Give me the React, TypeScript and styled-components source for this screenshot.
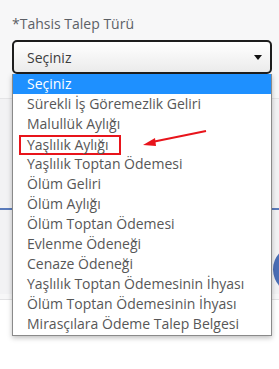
import React from "react";
import styled, { createGlobalStyle } from "styled-components";

const GlobalStyle = createGlobalStyle`
  html, body {
    margin: 0;
    padding: 0;
    background: #ffffff;
    font-family: "Open Sans", "Liberation Sans", sans-serif;
  }
`;

const Page = styled.div`
  width: 279px;
  height: 369px;
  overflow: hidden;
  background: #ffffff;
  position: relative;
`;

const Screen = styled.div`
  height: 300px;
  background: #f7f7f8;
  border-bottom: 1px solid #e2e2e4;
  padding-top: 15px;
  box-sizing: border-box;
`;

const Field = styled.div`
  margin-left: 12px;
  width: 260px;
  position: relative;
  z-index: 2;
`;

const Label = styled.label`
  display: block;
  font-size: 14px;
  line-height: 18px;
  color: #5c6066;
  margin-bottom: 7px;
`;

const SelectBox = styled.div`
  height: 34px;
  box-sizing: border-box;
  border: 2px solid #1e1e1e;
  border-radius: 5px;
  background: linear-gradient(#ffffff, #ebebeb);
  display: flex;
  align-items: center;
  justify-content: space-between;
  padding: 0 8px 0 13px;
  font-size: 14px;
  color: #3d3d3d;
`;

const Caret = styled.span`
  width: 0;
  height: 0;
  border-left: 4.5px solid transparent;
  border-right: 4.5px solid transparent;
  border-top: 5px solid #111;
`;

const Dropdown = styled.ul`
  position: absolute;
  left: 0;
  top: 100%;
  width: 260px;
  box-sizing: border-box;
  margin: 0;
  padding: 0 0 1px;
  list-style: none;
  background: #ffffff;
  border: 1px solid #8a8a8a;
  border-top: none;
  box-shadow: 0 2px 5px rgba(0, 0, 0, 0.25);
`;

const Option = styled.li<{ $active?: boolean }>`
  height: 20px;
  line-height: 20px;
  padding-left: 14px;
  font-size: 14px;
  white-space: nowrap;
  color: ${(p) => (p.$active ? "#ffffff" : "#575757")};
  background: ${(p) => (p.$active ? "#1e90ff" : "transparent")};
`;

const Marked = styled.span`
  display: inline-block;
  margin-left: -8px;
  padding: 0 11px 0 6px;
  height: 16px;
  line-height: 15px;
  border: 2px solid #e8141b;
  vertical-align: top;
  margin-top: 1px;
`;

const Card = styled.div`
  margin-top: 24px;
  height: 195px;
  background: #f2f2f4;
  border-top: 1px solid #e4e4e6;
  display: flex;
  flex-direction: column;
`;

const StepLine = styled.div`
  margin-top: 109px;
  height: 2px;
  background: #5a7bbb;
`;

const Fab = styled.div`
  align-self: flex-end;
  margin-top: 35px;
  margin-right: -44px;
  width: 50px;
  height: 50px;
  border-radius: 50%;
  background: #4a6db5;
`;

const Pointer = styled.svg`
  position: absolute;
  left: 140px;
  top: 127px;
  z-index: 3;
`;

const options = [
  "Seçiniz",
  "Sürekli İş Göremezlik Geliri",
  "Malullük Aylığı",
  "Yaşlılık Aylığı",
  "Yaşlılık Toptan Ödemesi",
  "Ölüm Geliri",
  "Ölüm Aylığı",
  "Ölüm Toptan Ödemesi",
  "Evlenme Ödeneği",
  "Cenaze Ödeneği",
  "Yaşlılık Toptan Ödemesinin İhyası",
  "Ölüm Toptan Ödemesinin İhyası",
  "Mirasçılara Ödeme Talep Belgesi",
];

const App: React.FC = () => {
  return (
    <>
      <GlobalStyle />
      <Page>
        <Screen>
          <Field>
            <Label>*Tahsis Talep Türü</Label>
            <SelectBox>
              <span>Seçiniz</span>
              <Caret />
            </SelectBox>
            <Dropdown>
              {options.map((o, i) => (
                <Option key={i} $active={i === 0}>
                  {o === "Yaşlılık Aylığı" ? <Marked>{o}</Marked> : o}
                </Option>
              ))}
            </Dropdown>
          </Field>
          <Card>
            <StepLine />
            <Fab />
          </Card>
        </Screen>
        <Pointer width="70" height="24" viewBox="0 0 70 24">
          <line x1="12" y1="15" x2="66" y2="4" stroke="#e8141b" strokeWidth="2" />
          <polygon points="3,18 15,11 16,19" fill="#e8141b" />
        </Pointer>
      </Page>
    </>
  );
};

export default App;
